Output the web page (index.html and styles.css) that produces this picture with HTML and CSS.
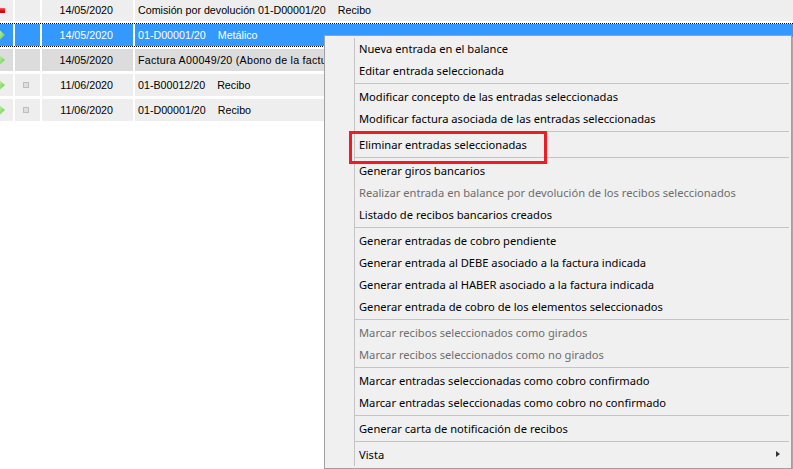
FILE: index.html
```html
<!DOCTYPE html>
<html lang="es">
<head>
<meta charset="utf-8">
<title>Entradas</title>
<link rel="stylesheet" href="styles.css">
</head>
<body>
<div class="grid">
  <div class="row">
    <div class="cell c-state"><svg class="ico" width="13" height="22" viewBox="0 0 13 22"><defs><linearGradient id="r" x1="0" y1="0" x2="0" y2="1"><stop offset="0" stop-color="#f86060"/><stop offset=".5" stop-color="#e81010"/><stop offset="1" stop-color="#b80808"/></linearGradient></defs><rect x="0" y="9" width="5" height="5" fill="url(#r)"/></svg></div>
    <div class="cell c-check"></div>
    <div class="cell c-date">14/05/2020</div>
    <div class="cell c-desc"><span>Comisión por devolución 01-D00001/20</span><span>Recibo</span></div>
  </div>
  <div class="row selected">
    <div class="cell c-state"><svg class="ico" width="13" height="22" viewBox="0 0 13 22"><use href="#gem"/></svg></div>
    <div class="cell c-check"></div>
    <div class="cell c-date">14/05/2020</div>
    <div class="cell c-desc"><span>01-D00001/20</span><span>Metálico</span></div>
  </div>
  <div class="row dark">
    <div class="cell c-state"><svg class="ico" width="13" height="22" viewBox="0 0 13 22"><use href="#gem"/></svg></div>
    <div class="cell c-check"></div>
    <div class="cell c-date">14/05/2020</div>
    <div class="cell c-desc"><span class="wide">Factura A00049/20 (Abono de la factura A00048/20)</span></div>
  </div>
  <div class="row">
    <div class="cell c-state"><svg class="ico" width="13" height="22" viewBox="0 0 13 22"><use href="#gem"/></svg></div>
    <div class="cell c-check"><i class="box"></i></div>
    <div class="cell c-date">11/06/2020</div>
    <div class="cell c-desc"><span>01-B00012/20</span><span>Recibo</span></div>
  </div>
  <div class="row">
    <div class="cell c-state"><svg class="ico" width="13" height="22" viewBox="0 0 13 22"><use href="#gem"/></svg></div>
    <div class="cell c-check"><i class="box"></i></div>
    <div class="cell c-date">11/06/2020</div>
    <div class="cell c-desc"><span>01-D00001/20</span><span>Recibo</span></div>
  </div>
</div>

<svg class="defs" width="0" height="0"><defs>
  <linearGradient id="g" x1="0" y1="0" x2="1" y2="1"><stop offset="0" stop-color="#c8f4b0"/><stop offset="1" stop-color="#58cc38"/></linearGradient>
  <polygon id="gem" points="-1,5.5 -1,16.5 5,11" fill="url(#g)"/>
</defs></svg>

<div class="menu">
  <div class="item">Nueva entrada en el balance</div>
  <div class="item">Editar entrada seleccionada</div>
  <div class="sep"></div>
  <div class="item">Modificar concepto de las entradas seleccionadas</div>
  <div class="item">Modificar factura asociada de las entradas seleccionadas</div>
  <div class="sep"></div>
  <div class="item">Eliminar entradas seleccionadas</div>
  <div class="sep"></div>
  <div class="item">Generar giros bancarios</div>
  <div class="item off">Realizar entrada en balance por devolución de los recibos seleccionados</div>
  <div class="item">Listado de recibos bancarios creados</div>
  <div class="sep"></div>
  <div class="item">Generar entradas de cobro pendiente</div>
  <div class="item">Generar entrada al DEBE asociado a la factura indicada</div>
  <div class="item">Generar entrada al HABER asociado a la factura indicada</div>
  <div class="item">Generar entrada de cobro de los elementos seleccionados</div>
  <div class="sep"></div>
  <div class="item off">Marcar recibos seleccionados como girados</div>
  <div class="item off">Marcar recibos seleccionados como no girados</div>
  <div class="sep"></div>
  <div class="item">Marcar entradas seleccionadas como cobro confirmado</div>
  <div class="item">Marcar entradas seleccionadas como cobro no confirmado</div>
  <div class="sep"></div>
  <div class="item">Generar carta de notificación de recibos</div>
  <div class="sep"></div>
  <div class="item sub">Vista<i class="arrow"></i></div>
</div>

<div class="mark"></div>
</body>
</html>
```

FILE: styles.css
```css
html, body {
  margin: 0;
  height: 469px;
  overflow: hidden;
  background: #fff;
}
body {
  position: relative;
  font-family: "Liberation Sans", Arial, sans-serif;
  font-size: 10.7px;
  color: #000;
}
.defs { position: absolute; }

.grid {
  display: flex;
  flex-direction: column;
  gap: 3px;
  margin-top: -1px;
}
.row {
  display: flex;
  gap: 2px;
  height: 22px;
  position: relative;
}
.cell {
  background: #eeeeee;
  line-height: 22px;
  white-space: nowrap;
  overflow: hidden;
}
.c-state { width: 13px; flex: none; }
.c-check {
  width: 25px;
  flex: none;
  display: flex;
  align-items: center;
  padding-left: 8px;
  box-sizing: border-box;
}
.c-date {
  width: 91px;
  flex: none;
  box-sizing: border-box;
  padding-right: 20px;
  text-align: right;
}
.c-desc {
  flex: 1;
  display: flex;
  gap: 12px;
  padding-left: 3px;
}
.wide { letter-spacing: 0.25px; }
.ico { display: block; }
.box {
  display: block;
  width: 4px;
  height: 4px;
  background: #dedede;
  border: 1px solid #bdbdbd;
}
.selected .cell { background: #3399ff; color: #fff; }
.selected::after {
  content: "";
  position: absolute;
  left: 0;
  right: 0;
  top: -1px;
  bottom: -1px;
  border-top: 1px dotted #000;
  border-bottom: 1px dotted #000;
}
.dark .cell { background: #dcdcdc; }

.menu {
  position: absolute;
  left: 324px;
  top: 35px;
  width: 468px;
  height: 434px;
  box-sizing: border-box;
  padding: 2px;
  border: 1px solid #a0a0a0;
  background: #f0f0f0;
  box-shadow: 2px 2px 0 #a9a9a9;
  font-family: "Noto Sans", "Open Sans", sans-serif;
  font-size: 11.16px;
}
.menu::before {
  content: "";
  position: absolute;
  left: 29px;
  top: 2px;
  bottom: 2px;
  width: 1px;
  background: #c4c4c4;
}
.item {
  height: 22px;
  line-height: 22px;
  padding-left: 32px;
  position: relative;
  white-space: nowrap;
}
.off { color: #6d6d6d; }
.sep {
  height: 1px;
  margin: 1px 0 2px 28px;
  background: #c4c4c4;
}
.arrow {
  position: absolute;
  right: 9px;
  top: 7px;
  width: 0;
  height: 0;
  border-left: 4px solid #333;
  border-top: 3.5px solid transparent;
  border-bottom: 3.5px solid transparent;
}
.mark {
  position: absolute;
  left: 349px;
  top: 131px;
  width: 198px;
  height: 33px;
  box-sizing: border-box;
  border: 3px solid #ee1c25;
}
```
